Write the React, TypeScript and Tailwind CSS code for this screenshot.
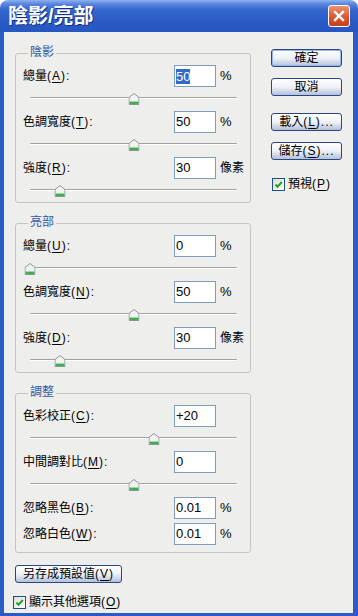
import React from 'react';

interface Row {
    name: string;
    hot: string;
    value: string;
    unit?: string;
    pct?: number;
    selected?: boolean;
}

const groups: { title: string; rows: Row[] }[] = [
    {
        title: '陰影',
        rows: [
            { name: '總量', hot: 'A', value: '50', unit: '%', pct: 50, selected: true },
            { name: '色調寬度', hot: 'T', value: '50', unit: '%', pct: 50 },
            { name: '強度', hot: 'R', value: '30', unit: '像素', pct: 14.5 },
        ],
    },
    {
        title: '亮部',
        rows: [
            { name: '總量', hot: 'U', value: '0', unit: '%', pct: 0 },
            { name: '色調寬度', hot: 'N', value: '50', unit: '%', pct: 50 },
            { name: '強度', hot: 'D', value: '30', unit: '像素', pct: 14.5 },
        ],
    },
];

function Hot({ name, hot, tail = ':' }: { name: string; hot: string; tail?: string }) {
    return (
        <>
            {name}
            <span className="tracking-[1px]">
                (<u className="underline-offset-2">{hot}</u>){tail}
            </span>
        </>
    );
}

function Field({ row }: { row: Row }) {
    return (
        <div className="flex h-[22px] items-center">
            <div className="w-[151px] text-[12px] text-black">
                <Hot name={row.name} hot={row.hot} />
            </div>
            <div className="flex h-[22px] w-[42px] items-center border border-[#7f9db9] bg-white pl-[1px] text-[13px] text-black">
                {row.selected ? <span className="bg-[#316ac5] leading-[15px] text-white">{row.value}</span> : row.value}
            </div>
            {row.unit && <span className={`ml-[4px] text-black ${row.unit === '%' ? 'text-[13px]' : 'text-[12px]'}`}>{row.unit}</span>}
        </div>
    );
}

function Slider({ pct, last }: { pct: number; last?: boolean }) {
    return (
        <div className={`${last ? 'h-[23px]' : 'h-[24px]'} pt-[10px] pl-[7px]`}>
            <div className="relative h-[2px] w-[207px] rounded-[1px] border-t border-[#a2a2a2] bg-white">
                <svg
                    width="11"
                    height="12"
                    viewBox="0 0 11 12"
                    className="absolute top-[-5px] -translate-x-1/2"
                    style={{ left: `${pct}%` }}
                >
                    <path d="M5.5 0.5 L10.5 4.5 V11.5 H0.5 V4.5 Z" fill="#f2f2f0" stroke="#8d949b" />
                    <rect x="1" y="8.5" width="9" height="2.5" fill="#3fae52" />
                    <rect x="1" y="8" width="9" height="1" fill="#9ed8a6" />
                </svg>
            </div>
        </div>
    );
}

function Group({ title, children, className = '' }: { title: string; children: React.ReactNode; className?: string }) {
    return (
        <div className={`relative rounded-[3px] border border-[#c4c4c0] pl-[7px] pt-[11px] ${className}`}>
            <span className="absolute left-[12px] top-[-9px] bg-[#eeeeec] px-[2px] text-[12px] leading-[14px] text-[#2d58a8]">{title}</span>
            {children}
        </div>
    );
}

function XpButton({ children, def, className = '' }: { children: React.ReactNode; def?: boolean; className?: string }) {
    return (
        <div
            className={`flex h-[18px] items-center justify-center rounded-[3px] border border-[#2a4684] bg-linear-to-b from-white via-[#eef1f7] to-[#b4c1dc] text-[12px] text-black ${def ? 'shadow-[inset_0_0_0_1px_#98b6ea]' : ''} ${className}`}
        >
            {children}
        </div>
    );
}

function XpCheck({ children }: { children: React.ReactNode }) {
    return (
        <div className="flex items-center gap-[3px] text-[12px] text-black">
            <div className="flex h-[13px] w-[13px] items-center justify-center border border-[#1c5180] bg-linear-to-br from-[#dcdcd7] to-white">
                <svg width="11" height="11" viewBox="0 0 11 11">
                    <path d="M2.5 5.5 L4.5 7.8 L8.8 3" fill="none" stroke="#21a121" strokeWidth="2" />
                </svg>
            </div>
            <span>{children}</span>
        </div>
    );
}

export default function App() {
    return (
        <div className="h-[616px] w-[358px] bg-white font-['Liberation_Sans','Noto_Sans_CJK_TC',sans-serif]">
            <div className="flex h-full flex-col overflow-hidden rounded-t-[8px]">
                {/* title bar */}
                <div className="flex h-[32px] shrink-0 items-center bg-[linear-gradient(to_bottom,#8eb2ef_0%,#5a88e0_12%,#3567cf_30%,#2c5cc7_60%,#2656c0_100%)] pl-[8px] pr-[8px]">
                    <span className="text-[20px] font-bold leading-[24px] text-white [text-shadow:1px_1px_0_#12307a]">陰影/亮部</span>
                    <div className="ml-auto flex h-[22px] w-[22px] items-center justify-center rounded-[3px] border border-white bg-[linear-gradient(to_bottom,#ec9170,#d8582f_55%,#c2401c)]">
                        <svg width="14" height="14" viewBox="0 0 14 14">
                            <path d="M3 3 L11 11 M11 3 L3 11" stroke="white" strokeWidth="2.4" strokeLinecap="square" />
                        </svg>
                    </div>
                </div>

                {/* frame */}
                <div className="flex-1 bg-[#2b5cc6] pb-[3px] pl-[4px] pr-[5px]">
                    <div className="flex h-full items-start bg-[#eeeeec] pl-[11px]">
                        <div className="flex w-[236px] flex-col pt-[21px]">
                            {groups.map((g, gi) => (
                                <Group key={g.title} title={g.title} className={gi > 0 ? 'mt-[20px]' : ''}>
                                    {g.rows.map((r, i) => (
                                        <div key={r.hot}>
                                            <Field row={r} />
                                            <Slider pct={r.pct ?? 0} last={i === g.rows.length - 1} />
                                        </div>
                                    ))}
                                </Group>
                            ))}

                            <Group title="調整" className="mt-[20px] pb-[7px]">
                                <Field row={{ name: '色彩校正', hot: 'C', value: '+20' }} />
                                <Slider pct={60} />
                                <Field row={{ name: '中間調對比', hot: 'M', value: '0' }} />
                                <Slider pct={50} />
                                <Field row={{ name: '忽略黑色', hot: 'B', value: '0.01', unit: '%' }} />
                                <div className="mt-[4px]">
                                    <Field row={{ name: '忽略白色', hot: 'W', value: '0.01', unit: '%' }} />
                                </div>
                            </Group>

                            <XpButton className="mt-[12px] w-[107px]">
                                <Hot name="另存成預設值" hot="V" tail="" />
                            </XpButton>
                            <div className="mt-[10px] -ml-[2px]">
                                <XpCheck>
                                    <Hot name="顯示其他選項" hot="O" tail="" />
                                </XpCheck>
                            </div>
                        </div>

                        <div className="ml-[20px] flex w-[71px] flex-col pt-[17px]">
                            <XpButton def>確定</XpButton>
                            <XpButton className="mt-[11px]">取消</XpButton>
                            <XpButton className="mt-[17px]">
                                <Hot name="載入" hot="L" tail="..." />
                            </XpButton>
                            <XpButton className="mt-[11px]">
                                <Hot name="儲存" hot="S" tail="..." />
                            </XpButton>
                            <div className="mt-[15px] ml-[1px]">
                                <XpCheck>
                                    <Hot name="預視" hot="P" tail="" />
                                </XpCheck>
                            </div>
                        </div>
                    </div>
                </div>
            </div>
        </div>
    );
}
